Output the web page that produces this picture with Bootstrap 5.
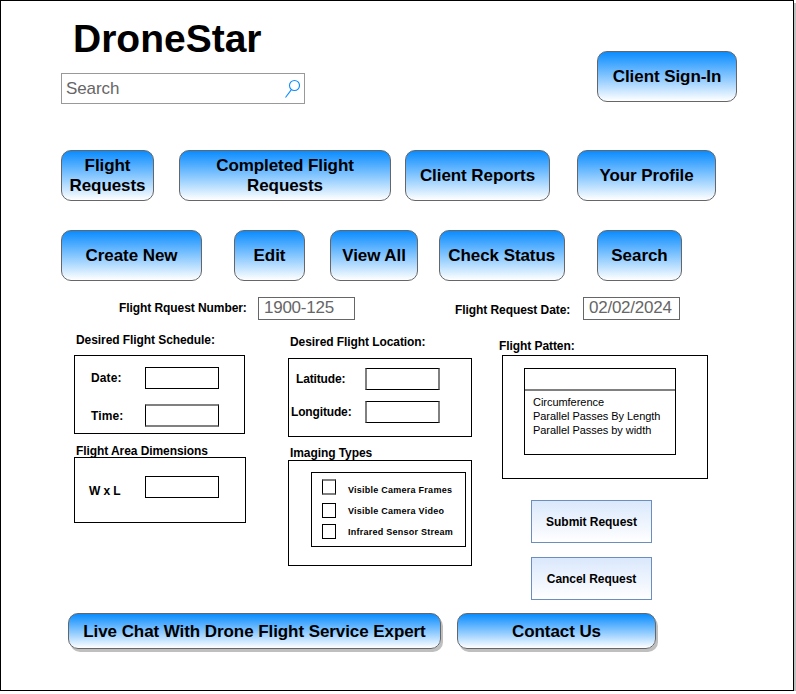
<!DOCTYPE html>
<html lang="en">
<head>
<meta charset="utf-8">
<meta name="viewport" content="width=device-width, initial-scale=1">
<title>DroneStar</title>
<link href="https://cdn.jsdelivr.net/npm/bootstrap@5.3.0/dist/css/bootstrap.min.css" rel="stylesheet">
<style>
  body { font-family: "Liberation Sans", Arial, sans-serif; color: #000; background: #fff; }
  .frame { width: 794px; height: 691px; border: 1px solid #000; box-shadow: 2px 3px 0 #bfbfbf; background: #fff; }

  /* header */
  .top { height: 149px; padding: 16px 56px 0 60px; }
  .brand { font-size: 39px; line-height: 44px; font-weight: 700; margin: 0 0 12px 12px; }
  .searchbox { width: 244px; height: 31px; border: 1px solid #999; padding: 0 4px; font-size: 17px; letter-spacing: -.1px; color: #666; }
  .signin { margin-top: 34px; }

  /* gradient buttons */
  .pill { display: flex; align-items: center; justify-content: center; height: 51px; padding: 0; border: 1px solid #666; border-radius: 10px;
    background: linear-gradient(#0a8cff, #fff); color: #000; font-size: 17px; font-weight: 700; line-height: 20px; letter-spacing: -.075px; text-align: center; }
  .pill:hover { color: #000; border-color: #666; }
  .bar { padding-left: 60px; }
  .w71 { width: 71px } .w85 { width: 85px } .w88 { width: 88px } .w93 { width: 93px } .w126 { width: 126.5px }
  .w139 { width: 139px } .w140 { width: 140px } .w141 { width: 141px } .w145 { width: 145px } .w199 { width: 199px }
  .w212 { width: 212px } .w373 { width: 373px }
  .g14 { margin-left: 14px } .g16 { margin-left: 16px } .g20 { margin-left: 20.5px } .g25 { margin-left: 25px } .g27 { margin-left: 27px } .g32 { margin-left: 32px }
  .actions { margin-top: 29px; }

  /* request identity row */
  .ident { height: 23px; margin-top: 16px; padding-left: 118px; }
  .tag { font-size: 12px; font-weight: 700; line-height: 14px; letter-spacing: -.075px; white-space: nowrap; margin: 0; }
  .value { width: 97px; height: 23px; border: 1px solid #666; padding-left: 5px; font-size: 17px; line-height: 20px; letter-spacing: -.25px; color: #666; }
  .numtag { width: 139px; margin-top: 4px; } .datetag { width: 128px; margin: 6px 0 0 100px; }

  /* form columns */
  .form { height: 293px; padding-left: 73px; }
  .col-a { width: 214px; padding-top: 13px; } .col-b { width: 214px; padding-top: 15px; } .col-c { width: 210px; padding-top: 19px; }
  .pane { border: 1px solid #000; }
  .field { width: 74px; height: 22px; border: 1px solid #000; background: #fff; flex: none; }
  .soft-y { height: 23px; border-block: 2px solid #808080; }
  .soft-x { width: 75px; border-inline: 2px solid #808080; }
  .in2 { margin-left: 2px; }

  .schedule { width: 171px; height: 79px; margin-top: 8px; padding: 11px 0 0 16px; }
  .schedule .tag { width: 54px; letter-spacing: .1px; }
  .time-line { margin-top: 15px; }
  .time-line .tag { padding-top: 5px; }
  .area-title { margin-top: 10px; }
  .area { width: 172px; height: 66px; margin-top: -1px; padding: 18px 0 0 14px; }
  .area .tag { width: 56px; padding-top: 8px; }

  .location { width: 184px; height: 79px; margin-top: 9px; padding: 9px 0 0 2px; }
  .location .tag { width: 74px; padding-top: 4px; letter-spacing: -.15px; }
  .location .lat { padding-left: 5px; }
  .long-line { margin-top: 11px; }
  .imaging-title { margin-top: 9px; }
  .imaging { width: 184px; height: 106px; padding: 11px 0 0 22px; }
  .types { width: 155px; height: 75px; padding: 6px 0 0 10px; }
  .types label { font-size: 9px; font-weight: 700; line-height: 11px; margin: 2px 0 0 12px; white-space: nowrap; letter-spacing: .25px; }
  .types .first { margin: 0 0 -1px 12px; }
  .box { width: 14px; height: 15px; border: 1px solid #000; }
  .box-soft { height: 16px; border-block: 2px solid #808080; }
  .line-a { height: 16px } .line-b { height: 15px; margin-top: 8px } .line-c { height: 15px; margin-top: 6px }

  .pattern-title { margin-left: -3px; }
  .pattern { width: 206px; height: 124px; margin-top: 2px; padding: 12px 0 0 21px; }
  .picker { width: 152px; height: 87px; }
  .chosen { height: 22px; border-bottom: 2px solid #808080; }
  .options { padding: 4px 0 0 8px; margin: 0; font-size: 11px; line-height: 14px; letter-spacing: -.04px; list-style: none; }
  .flat { width: 121px; height: 43px; margin-left: 29px; padding: 0; border: 1px solid #6c8ebf; border-radius: 0;
    background: linear-gradient(#dae8fc, #fff); color: #000; font-size: 12px; font-weight: 700; line-height: 14px; letter-spacing: -.04px; }
  .submit { margin-top: 21px } .cancel { margin-top: 14px }

  .foot { padding-left: 67px; }
  .foot .pill { height: 36px; padding-top: 1px; box-shadow: 2px 3px 0 #bfbfbf; }
</style>
<script src="https://cdn.jsdelivr.net/npm/bootstrap@5.3.0/dist/js/bootstrap.bundle.min.js"></script>
</head>
<body>
<main class="frame">
  <header class="top d-flex justify-content-between align-items-start">
    <div>
      <h1 class="brand">DroneStar</h1>
      <div class="searchbox d-flex align-items-center justify-content-between">
        <span>Search</span>
        <svg width="16" height="19" viewBox="0 0 16 19" fill="none" stroke="#0a8cff" stroke-width="1.1"><circle cx="10.5" cy="6.5" r="5"/><path d="M7.4 10.6L1.5 18.5"/></svg>
      </div>
    </div>
    <button class="btn pill signin w140">Client Sign-In</button>
  </header>

  <nav class="bar d-flex">
    <a class="btn pill w93">Flight<br>Requests</a>
    <a class="btn pill w212 g25">Completed Flight<br>Requests</a>
    <a class="btn pill w145 g14">Client Reports</a>
    <a class="btn pill w139 g27">Your Profile</a>
  </nav>
  <div class="bar actions d-flex">
    <button class="btn pill w141">Create New</button>
    <button class="btn pill w71 g32">Edit</button>
    <button class="btn pill w88 g25">View All</button>
    <button class="btn pill w126 g20">Check Status</button>
    <button class="btn pill w85 g32">Search</button>
  </div>

  <section class="ident d-flex align-items-start">
    <div class="tag numtag">Flight Rquest Number:</div><div class="value">1900-125</div>
    <div class="tag datetag">Flight Request Date:</div><div class="value">02/02/2024</div>
  </section>

  <section class="form d-flex">
    <div class="col-a">
      <h2 class="tag in2">Desired Flight Schedule:</h2>
      <div class="pane schedule">
        <div class="d-flex"><span class="tag pt-1">Date:</span><div class="field"></div></div>
        <div class="d-flex time-line"><span class="tag">Time:</span><div class="field soft-y"></div></div>
      </div>
      <h2 class="tag in2 area-title">Flight Area Dimensions</h2>
      <div class="pane area d-flex"><span class="tag">W x L</span><div class="field"></div></div>
    </div>
    <div class="col-b">
      <h2 class="tag in2">Desired Flight Location:</h2>
      <div class="pane location">
        <div class="d-flex"><span class="tag lat">Latitude:</span><div class="field soft-x"></div></div>
        <div class="d-flex long-line"><span class="tag">Longitude:</span><div class="field soft-x"></div></div>
      </div>
      <h2 class="tag in2 imaging-title">Imaging Types</h2>
      <div class="pane imaging">
        <div class="pane types">
          <div class="d-flex align-items-end line-a"><div class="box box-soft"></div><label class="first">Visible Camera Frames</label></div>
          <div class="d-flex align-items-center line-b"><div class="box"></div><label>Visible Camera Video</label></div>
          <div class="d-flex align-items-center line-c"><div class="box"></div><label>Infrared Sensor Stream</label></div>
        </div>
      </div>
    </div>
    <div class="col-c">
      <h2 class="tag pattern-title">Flight Patten:</h2>
      <div class="pane pattern">
        <div class="pane picker">
          <div class="chosen"></div>
          <ul class="options"><li>Circumference</li><li>Parallel Passes By Length</li><li>Parallel Passes by width</li></ul>
        </div>
      </div>
      <button class="btn flat submit d-block">Submit Request</button>
      <button class="btn flat cancel d-block">Cancel Request</button>
    </div>
  </section>

  <footer class="foot d-flex">
    <button class="btn pill w373">Live Chat With Drone Flight Service Expert</button>
    <button class="btn pill w199 g16">Contact Us</button>
  </footer>
</main>
</body>
</html>
